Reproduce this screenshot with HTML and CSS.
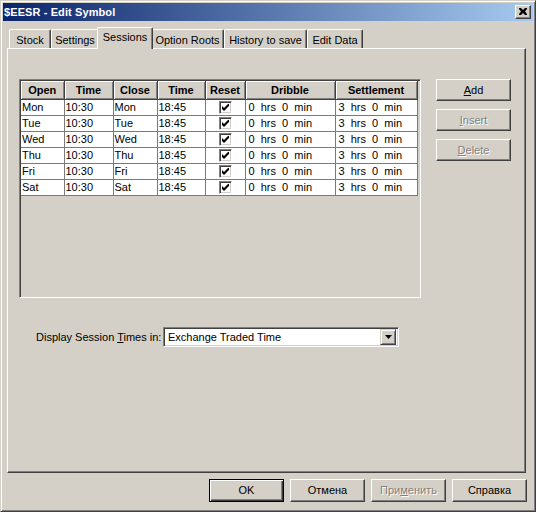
FILE: index.html
```html
<!DOCTYPE html>
<html>
<head>
<meta charset="utf-8">
<title>$EESR - Edit Symbol</title>
<link rel="stylesheet" href="styles.css">
</head>
<body>
<div class="window">
  <div class="titlebar">
    <span class="title">$EESR - Edit Symbol</span>
    <span class="close-btn">
      <svg width="8" height="7" viewBox="0 0 8 7"><path d="M0 0h2l2 2 2-2h2v1l-2 2.5 2 2.5v1h-2l-2-2-2 2h-2v-1l2-2.5-2-2.5z" fill="#000"/></svg>
    </span>
  </div>
  <div class="client">
    <div class="tabs">
      <span class="tab w-stock">Stock</span>
      <span class="tab w-settings">Settings</span>
      <span class="tab active w-sessions">Sessions</span>
      <span class="tab w-roots">Option Roots</span>
      <span class="tab w-history">History to save</span>
      <span class="tab w-edit">Edit Data</span>
    </div>
    <div class="panel">
      <div class="panel-top">
        <div class="grid-box">
          <table class="grid">
            <colgroup>
              <col class="c-open"><col class="c-time"><col class="c-close"><col class="c-time2"><col class="c-reset"><col class="c-dribble"><col class="c-settle">
            </colgroup>
            <thead>
              <tr><th>Open</th><th>Time</th><th>Close</th><th>Time</th><th>Reset</th><th>Dribble</th><th>Settlement</th></tr>
            </thead>
            <tbody>
              <tr><td>Mon</td><td>10:30</td><td>Mon</td><td>18:45</td><td class="chk"><span class="checkbox"></span></td><td class="dur">0  hrs  0  min</td><td class="dur">3  hrs  0  min</td></tr>
              <tr><td>Tue</td><td>10:30</td><td>Tue</td><td>18:45</td><td class="chk"><span class="checkbox"></span></td><td class="dur">0  hrs  0  min</td><td class="dur">3  hrs  0  min</td></tr>
              <tr><td>Wed</td><td>10:30</td><td>Wed</td><td>18:45</td><td class="chk"><span class="checkbox"></span></td><td class="dur">0  hrs  0  min</td><td class="dur">3  hrs  0  min</td></tr>
              <tr><td>Thu</td><td>10:30</td><td>Thu</td><td>18:45</td><td class="chk"><span class="checkbox"></span></td><td class="dur">0  hrs  0  min</td><td class="dur">3  hrs  0  min</td></tr>
              <tr><td>Fri</td><td>10:30</td><td>Fri</td><td>18:45</td><td class="chk"><span class="checkbox"></span></td><td class="dur">0  hrs  0  min</td><td class="dur">3  hrs  0  min</td></tr>
              <tr><td>Sat</td><td>10:30</td><td>Sat</td><td>18:45</td><td class="chk"><span class="checkbox"></span></td><td class="dur">0  hrs  0  min</td><td class="dur">3  hrs  0  min</td></tr>
            </tbody>
          </table>
        </div>
        <div class="side-buttons">
          <span class="btn"><u>A</u>dd</span>
          <span class="btn disabled"><u>I</u>nsert</span>
          <span class="btn disabled"><u>D</u>elete</span>
        </div>
      </div>
      <div class="tz-row">
        <span class="tz-label">Display Session <u>T</u>imes in:</span>
        <div class="combo">
          <span class="combo-text">Exchange Traded Time</span>
          <span class="combo-arrow">
            <svg width="7" height="4" viewBox="0 0 7 4"><path d="M0 0h7L3.5 4z" fill="#000"/></svg>
          </span>
        </div>
      </div>
    </div>
    <div class="footer">
      <span class="btn default">OK</span>
      <span class="btn">Отмена</span>
      <span class="btn disabled">При<u>м</u>енить</span>
      <span class="btn">Справка</span>
    </div>
  </div>
</div>
</body>
</html>
```

FILE: styles.css
```css
* { box-sizing: border-box; }

html, body {
  margin: 0;
  padding: 0;
  background: #d4d0c8;
}

body {
  font-family: "Liberation Sans", Arial, sans-serif;
  font-size: 11px;
  color: #000;
}

u { text-decoration: underline; text-underline-offset: 1px; }

/* ---- window frame ---- */
.window {
  width: 536px;
  height: 512px;
  background: #d4d0c8;
  border: 1px solid;
  border-color: #d4d0c8 #404040 #404040 #d4d0c8;
  box-shadow: inset 1px 1px #fff, inset -1px -1px #808080;
  padding: 2px;
  display: flex;
  flex-direction: column;
}

.titlebar {
  height: 18px;
  background: linear-gradient(to right, #0a246a, #a6caf0);
  display: flex;
  align-items: center;
  justify-content: space-between;
  padding: 0 2px 0 1px;
}

.title {
  color: #fff;
  font-weight: bold;
  font-size: 11px;
  letter-spacing: 0.1px;
}

.close-btn {
  width: 16px;
  height: 14px;
  background: #d4d0c8;
  border: 1px solid;
  border-color: #fff #404040 #404040 #fff;
  box-shadow: inset -1px -1px #808080;
  display: flex;
  align-items: center;
  justify-content: center;
  padding-bottom: 1px;
}

.client {
  flex: 1;
  display: flex;
  flex-direction: column;
  padding: 5px 4px 0 4px;
}

/* ---- tab strip ---- */
.tabs {
  height: 22px;
  display: flex;
  align-items: flex-end;
  padding-left: 2px;
}

.tab {
  height: 19px;
  background: #d4d0c8;
  border-top: 1px solid #fff;
  border-left: 1px solid #fff;
  border-right: 1px solid #404040;
  border-top-left-radius: 2px;
  border-top-right-radius: 2px;
  box-shadow: inset -1px 0 #808080;
  text-align: center;
  line-height: 16px;
  padding-top: 2px;
  white-space: nowrap;
}

.tab.active {
  height: 22px;
  margin: 0 -2px -1px;
  position: relative;
  z-index: 1;
  line-height: 16px;
  padding-top: 1px;
}

.w-stock { width: 42px; }
.w-settings { width: 48px; }
.w-sessions { width: 56px; }
.w-roots { width: 73px; }
.w-history { width: 83px; }
.w-edit { width: 56px; }

/* ---- tab page ---- */
.panel {
  width: 519px;
  height: 425px;
  border: 1px solid;
  border-color: #fff #404040 #404040 #fff;
  box-shadow: inset -1px -1px #808080;
  padding: 30px 0 0 11px;
}

.panel-top {
  display: flex;
  align-items: flex-start;
}

.grid-box {
  width: 402px;
  height: 219px;
  border: 1px solid;
  border-color: #808080 #fff #fff #808080;
  box-shadow: inset 1px 1px #404040;
  padding: 1px 0 0 1px;
}

.grid {
  border-collapse: collapse;
  table-layout: fixed;
  width: 396px;
}

.c-open { width: 43px; }
.c-time { width: 49px; }
.c-close { width: 44px; }
.c-time2 { width: 48px; }
.c-reset { width: 40px; }
.c-dribble { width: 90px; }
.c-settle { width: 82px; }

.grid th {
  height: 18px;
  padding: 0;
  font-weight: bold;
  text-align: center;
  background: #d4d0c8;
  border-right: 1px solid #404040;
  border-bottom: 1px solid #404040;
  box-shadow: inset 1px 1px #fff, inset -1px -1px #808080;
}

.grid td {
  height: 16px;
  padding: 0 0 0 1px;
  background: #fff;
  border-right: 1px solid #7a7a7a;
  border-bottom: 1px solid #7a7a7a;
  white-space: nowrap;
  overflow: hidden;
  line-height: 15px;
}

.grid td.dur {
  white-space: pre;
  padding-left: 3px;
}

.grid td.chk {
  text-align: center;
  padding: 0;
}

.checkbox {
  display: inline-block;
  width: 13px;
  height: 13px;
  vertical-align: top;
  margin-top: 1px;
  border: 1px solid;
  border-color: #808080 #fff #fff #808080;
  box-shadow: inset 1px 1px #404040, inset -1px -1px #d4d0c8;
  background: #fff url("data:image/svg+xml,%3Csvg xmlns='http://www.w3.org/2000/svg' width='7' height='7'%3E%3Cpath d='M0 2v3l2 2 5-5V-1L2 4z' fill='%23000'/%3E%3C/svg%3E") no-repeat 2px 2px;
}

/* ---- buttons ---- */
.side-buttons {
  display: flex;
  flex-direction: column;
  gap: 8px;
  margin-left: 15px;
}

.btn {
  width: 75px;
  height: 22px;
  display: flex;
  align-items: center;
  justify-content: center;
  background: #d4d0c8;
  border: 1px solid;
  border-color: #fff #404040 #404040 #fff;
  box-shadow: inset -1px -1px #808080;
  padding-bottom: 1px;
}

.btn.disabled {
  color: #808080;
  text-shadow: 1px 1px #fff;
}

.btn.default {
  border: 1px solid #000;
  box-shadow: inset 1px 1px #fff, inset -1px -1px #404040, inset -2px -2px #808080;
}

/* ---- time zone selector ---- */
.tz-row {
  display: flex;
  align-items: center;
  margin-top: 29px;
  padding-left: 17px;
}

.tz-label {
  width: 127px;
}

.combo {
  width: 236px;
  height: 20px;
  background: #fff;
  border: 1px solid;
  border-color: #808080 #fff #fff #808080;
  box-shadow: inset 1px 1px #404040, inset -1px -1px #d4d0c8;
  display: flex;
  align-items: center;
  justify-content: space-between;
  padding: 2px 2px 2px 4px;
}

.combo-arrow {
  width: 16px;
  height: 16px;
  background: #d4d0c8;
  border: 1px solid;
  border-color: #d4d0c8 #404040 #404040 #d4d0c8;
  box-shadow: inset 1px 1px #fff, inset -1px -1px #808080;
  display: flex;
  align-items: center;
  justify-content: center;
}

/* ---- dialog buttons ---- */
.footer {
  display: flex;
  justify-content: flex-end;
  gap: 6px;
  margin-top: 6px;
  padding-right: 2px;
}

.footer .btn { height: 23px; }
```
